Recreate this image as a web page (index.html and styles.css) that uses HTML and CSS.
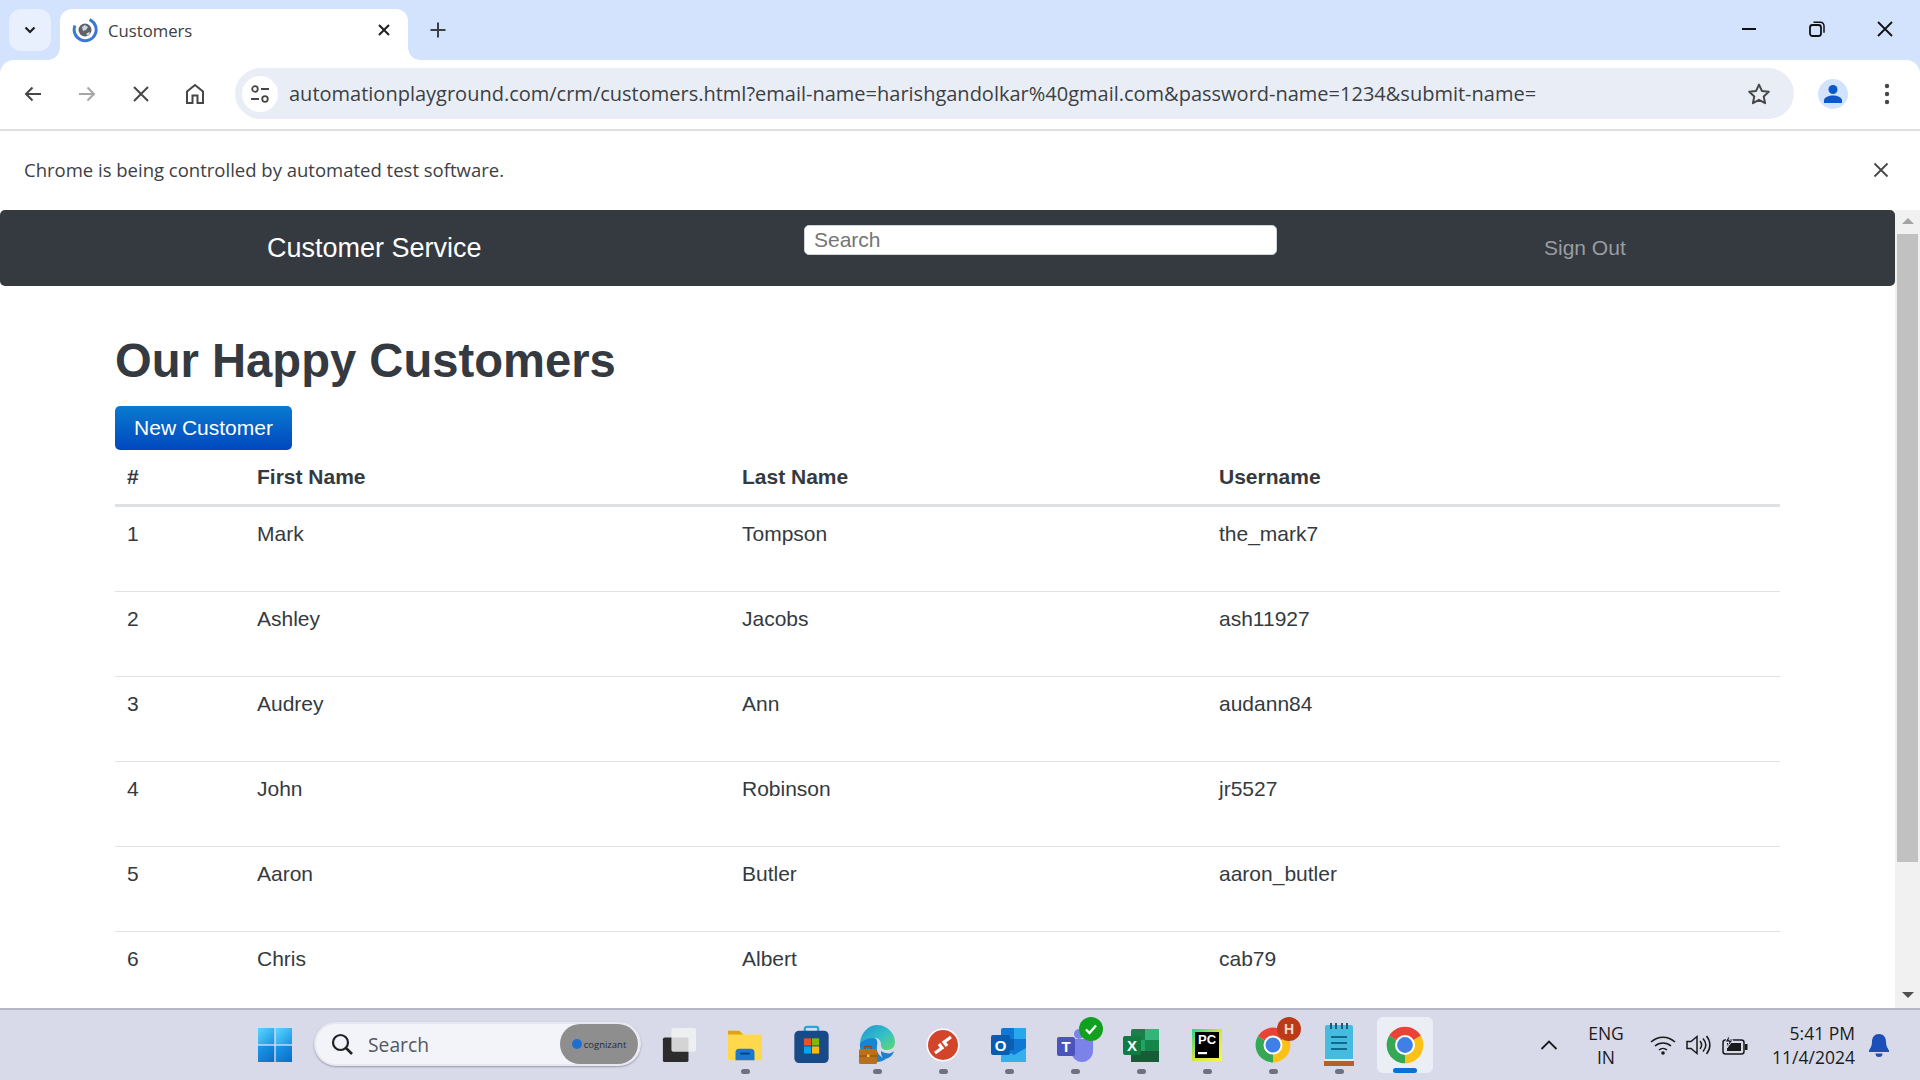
FILE: index.html
```html
<!DOCTYPE html>
<html lang="en">
<head>
<meta charset="utf-8">
<title>Customers</title>
<link rel="stylesheet" href="styles.css">
</head>
<body>
<svg class="defs" aria-hidden="true">
  <symbol id="chrome" viewBox="0 0 48 48">
    <path fill="#ea4335" d="M24 24L43.05 13A22 22 0 0 0 4.95 13Z"/>
    <path fill="#fbc116" d="M24 24L43.05 13A22 22 0 0 1 24 46Z"/>
    <path fill="#34a853" d="M24 24L24 46A22 22 0 0 1 4.95 13Z"/>
    <circle cx="24" cy="24" r="12" fill="#fff"/>
    <circle cx="24" cy="24" r="9.5" fill="#3f80e8"/>
  </symbol>
</svg>
<div class="screen">
  <header class="titlebar">
    <div class="tab-group"><svg width="14" height="14" viewBox="0 0 14 14"><path d="M2.5 4.5L7 9l4.500-4.500" fill="none" stroke="#1f1f1f" stroke-width="2.200"/></svg></div>
    <div class="tab">
      <svg class="favicon" width="26" height="26" viewBox="0 0 26 26"><circle cx="13" cy="13" r="6.500" fill="#5f6368"/><path d="M10 10l3-2 3 2-2 3-3 1zM14 17l3-2 1 1-2 3z" fill="#c9d4e6"/><path d="M17.500 2.600A11 11 0 1 1 3 8.500" fill="none" stroke="#3a78d6" stroke-width="3"/></svg>
      <span class="tab-title">Customers</span>
      <svg class="tab-close" width="14" height="14" viewBox="0 0 14 14"><path d="M2 2l10 10M12 2L2 12" stroke="#1f1f1f" stroke-width="2"/></svg>
    </div>
    <svg class="new-tab" width="18" height="18" viewBox="0 0 18 18"><path d="M9 1.500v15M1.500 9h15" stroke="#3c4043" stroke-width="2"/></svg>
    <div class="win-controls">
      <svg width="16" height="16" viewBox="0 0 16 16"><path d="M1 8h14" stroke="#111" stroke-width="2"/></svg>
      <svg width="16" height="16" viewBox="0 0 16 16"><rect x="1" y="4" width="11" height="11" rx="2.500" fill="none" stroke="#111" stroke-width="1.800"/><path d="M4.500 1.200h7a3.500 3.500 0 0 1 3.500 3.500v7" fill="none" stroke="#111" stroke-width="1.500"/></svg>
      <svg width="16" height="16" viewBox="0 0 16 16"><path d="M1 1l14 14M15 1L1 15" stroke="#111" stroke-width="1.800"/></svg>
    </div>
  </header>

  <nav class="toolbar">
    <span class="tool"><svg width="20" height="20" viewBox="0 0 20 20"><path d="M18 10H3M9.500 3.500L3 10l6.500 6.500" fill="none" stroke="#474747" stroke-width="2"/></svg></span>
    <span class="tool"><svg width="20" height="20" viewBox="0 0 20 20"><path d="M2 10h15M10.500 3.500L17 10l-6.500 6.500" fill="none" stroke="#a6a6a6" stroke-width="2"/></svg></span>
    <span class="tool"><svg width="18" height="18" viewBox="0 0 18 18"><path d="M2 2l14 14M16 2L2 16" stroke="#474747" stroke-width="2"/></svg></span>
    <span class="tool"><svg width="20" height="22" viewBox="0 0 20 22"><path d="M2 20V8.500L10 2l8 6.500V20h-5.500v-7.500h-5V20z" fill="none" stroke="#474747" stroke-width="2"/></svg></span>
    <div class="omnibox">
      <span class="site-info"><svg width="20" height="20" viewBox="0 0 20 20"><circle cx="5" cy="5" r="2.800" fill="none" stroke="#474747" stroke-width="1.800"/><path d="M11 5h8M1 15h8" stroke="#474747" stroke-width="1.800"/><circle cx="15" cy="15" r="2.800" fill="none" stroke="#474747" stroke-width="1.800"/></svg></span>
      <span class="url">automationplayground.com/crm/customers.html?email-name=harishgandolkar%40gmail.com&amp;password-name=1234&amp;submit-name=</span>
      <svg class="star" width="24" height="24" viewBox="0 0 24 24"><path d="M12 2.600l2.900 6.300 6.900.8-5.100 4.700 1.400 6.800-6.100-3.400-6.100 3.400 1.400-6.800-5.100-4.700 6.900-.8z" fill="none" stroke="#474747" stroke-width="2" stroke-linejoin="round"/></svg>
    </div>
    <span class="avatar"><svg width="20" height="20" viewBox="0 0 20 20"><circle cx="10" cy="5.500" r="4.500" fill="#0b57d0"/><path d="M1 19v-2.500C1 13 6 11.500 10 11.500s9 1.500 9 5V19z" fill="#0b57d0"/></svg></span>
    <span class="kebab"><svg width="6" height="22" viewBox="0 0 6 22"><circle cx="3" cy="3" r="2.200" fill="#474747"/><circle cx="3" cy="11" r="2.200" fill="#474747"/><circle cx="3" cy="19" r="2.200" fill="#474747"/></svg></span>
  </nav>

  <div class="infobar">
    <span>Chrome is being controlled by automated test software.</span>
    <svg width="16" height="16" viewBox="0 0 16 16"><path d="M1.500 1.500l13 13M14.500 1.500l-13 13" stroke="#474747" stroke-width="1.800"/></svg>
  </div>

  <div class="viewport">
    <main class="page">
      <div class="navbar">
        <a class="brand">Customer Service</a>
        <input class="nav-search" type="text" placeholder="Search">
        <a class="signout">Sign Out</a>
      </div>
      <section class="content">
        <h1>Our Happy Customers</h1>
        <button class="btn-new">New Customer</button>
        <table class="customers">
          <colgroup><col class="c1"><col class="c2"><col class="c3"><col class="c4"></colgroup>
          <thead><tr><th>#</th><th>First Name</th><th>Last Name</th><th>Username</th></tr></thead>
          <tbody>
            <tr><td>1</td><td>Mark</td><td>Tompson</td><td>the_mark7</td></tr>
            <tr><td>2</td><td>Ashley</td><td>Jacobs</td><td>ash11927</td></tr>
            <tr><td>3</td><td>Audrey</td><td>Ann</td><td>audann84</td></tr>
            <tr><td>4</td><td>John</td><td>Robinson</td><td>jr5527</td></tr>
            <tr><td>5</td><td>Aaron</td><td>Butler</td><td>aaron_butler</td></tr>
            <tr><td>6</td><td>Chris</td><td>Albert</td><td>cab79</td></tr>
          </tbody>
        </table>
      </section>
    </main>
    <aside class="scrollbar">
      <span class="arrow-up"></span>
      <span class="thumb"></span>
      <span class="arrow-down"></span>
    </aside>
  </div>

  <footer class="taskbar">
    <span class="start"><svg width="36" height="36" viewBox="0 0 36 36"><defs><linearGradient id="w1" x1="0" y1="0" x2="1" y2="1"><stop offset="0" stop-color="#5cd6fb"/><stop offset="1" stop-color="#1a93e6"/></linearGradient><linearGradient id="w2" x1="0" y1="0" x2="1" y2="1"><stop offset="0" stop-color="#1b9be8"/><stop offset="1" stop-color="#0a6cc9"/></linearGradient></defs><path d="M1 1h16.300v16.300H1z" fill="url(#w1)"/><path d="M18.700 1H35v16.300H18.700z" fill="url(#w1)"/><path d="M1 18.700h16.300V35H1z" fill="url(#w2)"/><path d="M18.700 18.700H35V35H18.700z" fill="url(#w2)"/></svg></span>
    <div class="task-search">
      <svg width="24" height="24" viewBox="0 0 24 24"><circle cx="10.500" cy="10.500" r="7.500" fill="none" stroke="#222" stroke-width="2.200"/><path d="M16 16l6 6" stroke="#222" stroke-width="2.600"/></svg>
      <span class="task-search-label">Search</span>
      <span class="cognizant"><i class="cog-dot"></i>cognizant</span>
    </div>
    <div class="apps">
      <span class="app"><svg width="36" height="36" viewBox="0 0 38 38"><rect x="2" y="11" width="27" height="26" rx="2" fill="#2c2c2c"/><rect x="11" y="1" width="26" height="25" rx="2" fill="#f2f2f2" fill-opacity=".85"/></svg></span>
      <span class="app dot"><svg width="36" height="34" viewBox="0 0 38 34"><path d="M1 4a2 2 0 0 1 2-2h10l4 4h20v27H1z" fill="#ffd84d"/><path d="M1 2h12l4 4H1z" fill="#e0a411"/><path d="M9 33v-8a4 4 0 0 1 4-4h12a4 4 0 0 1 4 4v8z" fill="#1a78d0"/><path d="M14 26h10" stroke="#0b3e78" stroke-width="2"/></svg></span>
      <span class="app"><svg width="35" height="40" viewBox="0 0 36 42"><path d="M11 9V4a2 2 0 0 1 2-2h10a2 2 0 0 1 2 2v5" fill="none" stroke="#29a6e0" stroke-width="2.400"/><rect y="6" width="36" height="34" rx="5" fill="#174a86"/><rect x="10" y="14" width="7.500" height="7.500" fill="#f25022"/><rect x="18.500" y="14" width="7.500" height="7.500" fill="#7fba00"/><rect x="10" y="22.500" width="7.500" height="7.500" fill="#00a4ef"/><rect x="18.500" y="22.500" width="7.500" height="7.500" fill="#ffb900"/></svg></span>
      <span class="app dot"><svg width="36" height="40" viewBox="0 0 36 40"><defs><linearGradient id="e1" x1="0" y1="0" x2="1" y2="1"><stop offset="0" stop-color="#1b94d8"/><stop offset=".55" stop-color="#35c1c4"/><stop offset="1" stop-color="#64d86a"/></linearGradient></defs><path d="M1 18C2 7 10 0 18 0c10 0 18 8 18 17 0 5-3 8-8 8-4 0-6-2-6-5 0-4-2-7-6-7-7 0-11 3-15 5z" fill="url(#e1)"/><path d="M1 18c3-3 8-5 13-5 4 0 5 3 4 8-1 6 2 11 9 13-3 2-6 3-9 3C8 37 0 29 1 18z" fill="#1a84cf"/><path d="M26 34c5-1 8-4 9-8-2 2-5 3-8 2-2 0-3-1-5-2 0 4 1 7 4 8z" fill="#1f7fc8"/><rect x="0" y="24" width="18" height="15" rx="1.500" fill="#b8701c"/><path d="M0 31h18" stroke="#8a4a10" stroke-width="1"/><path d="M6 24v-2.500h6V24" fill="none" stroke="#8a4a10" stroke-width="1.500"/><rect x="8" y="29.500" width="2.500" height="2.500" fill="#f4c34a"/></svg></span>
      <span class="app dot"><svg width="34" height="34" viewBox="0 0 34 34"><circle cx="17" cy="17" r="16.500" fill="#fff"/><circle cx="17" cy="17" r="15" fill="#d3452b"/><path d="M25 9l-7 5 3 4M9 25l7-5-3-4" fill="none" stroke="#fff" stroke-width="3.200"/></svg></span>
      <span class="app dot"><svg width="36" height="34" viewBox="0 0 36 34"><rect x="10" y="0" width="25" height="34" rx="2" fill="#0f78d4"/><rect x="23" y="0" width="12" height="11" fill="#28a8ea"/><rect x="10" y="11" width="13" height="11" fill="#0a5fb0"/><path d="M10 20l13 7 12-7v14H10z" fill="#35b0ee"/><rect x="0" y="7" width="19" height="20" rx="2" fill="#0a5cb0"/><text class="app-letter" x="9.500" y="22.500" text-anchor="middle">O</text></svg></span>
      <span class="app dot"><svg width="36" height="33" viewBox="0 0 36 33"><circle cx="22" cy="5" r="5" fill="#7b83eb"/><path d="M14 10h20a2 2 0 0 1 2 2v10c0 6-5 11-11 11s-11-5-11-11z" fill="#7b83eb"/><rect x="0" y="8" width="18" height="19" rx="2" fill="#4b53bc"/><text class="app-letter" x="9" y="23" text-anchor="middle">T</text></svg><span class="badge badge-green"><svg width="14" height="14" viewBox="0 0 14 14"><path d="M2 7.500L5.500 11 12 3.500" fill="none" stroke="#fff" stroke-width="2.400"/></svg></span></span>
      <span class="app dot"><svg width="36" height="33" viewBox="0 0 36 33"><rect x="8" y="0" width="28" height="33" rx="2" fill="#1a7f4c"/><rect x="22" y="0" width="14" height="11" fill="#35b479"/><rect x="8" y="11" width="14" height="11" fill="#21a366"/><rect x="22" y="11" width="14" height="11" fill="#15854a"/><rect x="8" y="22" width="28" height="11" fill="#185c37"/><rect x="0" y="7" width="18" height="19" rx="2" fill="#107c41"/><text class="app-letter" x="9" y="22" text-anchor="middle">X</text></svg></span>
      <span class="app dot"><svg width="30" height="32" viewBox="0 0 30 32"><defs><linearGradient id="pc" x1="0" y1="0" x2="1" y2="1"><stop offset="0" stop-color="#21d789"/><stop offset=".5" stop-color="#d4e53a"/><stop offset="1" stop-color="#fcf84a"/></linearGradient></defs><rect width="30" height="32" fill="url(#pc)"/><rect x="3" y="3" width="24" height="26" fill="#000"/><text class="pc-letter" x="15" y="15" text-anchor="middle">PC</text><rect x="6" y="23" width="9" height="2.200" fill="#fff"/></svg></span>
      <span class="app dot"><svg width="38" height="46"><use href="#chrome"/></svg><span class="badge badge-red">H</span></span>
      <span class="app dot"><svg width="30" height="46" viewBox="0 0 30 46"><rect x="1" y="3" width="28" height="37" rx="2" fill="#45bcdf"/><path d="M7 1v6M12 1v6M18 1v6M23 1v6" stroke="#1d5c78" stroke-width="2"/><path d="M7 15h16M7 21h16M7 27h16" stroke="#0f6a8c" stroke-width="2.200"/><rect y="38" width="30" height="6" fill="#b5602a"/><rect y="37" width="30" height="2" fill="#f4e6d0"/></svg></span>
      <span class="app active"><svg width="40" height="46"><use href="#chrome"/></svg></span>
    </div>
    <div class="tray">
      <svg class="tray-chevron" width="18" height="10" viewBox="0 0 18 10"><path d="M1.500 9L9 1.500 16.500 9" fill="none" stroke="#1a1a1a" stroke-width="1.800"/></svg>
      <span class="lang">ENG<br>IN</span>
      <svg class="tray-wifi" width="26" height="20" viewBox="0 0 26 20"><path d="M1 7c7-6.500 17-6.500 24 0M5 11c4.500-4 11.500-4 16 0M9 15c2.300-2 5.700-2 8 0" fill="none" stroke="#1a1a1a" stroke-width="1.500"/><circle cx="13" cy="18" r="1.800" fill="#1a1a1a"/></svg>
      <svg class="tray-vol" width="26" height="22" viewBox="0 0 26 22"><path d="M1 7.500h4l6-5v17l-6-5H1z" fill="none" stroke="#1a1a1a" stroke-width="1.500"/><path d="M14 7c2 2.500 2 5.500 0 8M17 4.500c3.500 4 3.500 9 0 13M20.500 2c4.500 5.500 4.500 12.500 0 18" fill="none" stroke="#1a1a1a" stroke-width="1.500"/></svg>
      <svg class="tray-batt" width="26" height="22" viewBox="0 0 26 22"><rect x="1" y="6" width="21" height="14" rx="2.500" fill="none" stroke="#1a1a1a" stroke-width="1.500"/><rect x="5" y="9" width="14" height="8" fill="#1a1a1a"/><rect x="23" y="10" width="2.500" height="6" fill="#1a1a1a"/><path d="M8 0L3 8h4l-2 6 6-8H7z" fill="#1a1a1a" stroke="#d8daea"/></svg>
      <span class="clock">5:41 PM<br>11/4/2024</span>
      <svg class="tray-bell" width="22" height="24" viewBox="0 0 22 24"><path d="M11 1c-4.500 0-7 3.500-7 7.500 0 5-2 7-3 9v1.500h20v-1.500c-1-2-3-4-3-9C18 4.500 15.500 1 11 1z" fill="#1c4fb8"/><path d="M7.500 20.500a3.500 3.500 0 0 0 7 0z" fill="#1c4fb8"/></svg>
    </div>
  </footer>
</div>
</body>
</html>
```

FILE: styles.css
```css
* { box-sizing: border-box; }
html, body { margin: 0; padding: 0; height: 100%; overflow: hidden; }
body { font-family: "Liberation Sans", Arial, sans-serif; color: #212529; background: #fff; }
.defs { width: 0; height: 0; position: absolute; }
.screen { width: 1920px; height: 1080px; display: flex; flex-direction: column; overflow: hidden; background: #d3e3fd; }

/* window tab strip */
.titlebar { height: 60px; flex: none; display: flex; align-items: flex-start; padding: 9px 0 0 9px; }
.tab-group { width: 42px; height: 42px; border-radius: 12px; background: #e8f0fe; display: flex; align-items: center; justify-content: center; }
.tab { position: relative; width: 348px; height: 51px; margin-left: 9px; padding: 0 17px 9px 12px; background: #fff; border-radius: 12px 12px 0 0; display: flex; align-items: center; }
.tab::before, .tab::after { content: ""; position: absolute; bottom: 0; width: 12px; height: 12px; }
.tab::before { left: -12px; background: radial-gradient(circle at 0 0, #d3e3fd 11.500px, #fff 12px); }
.tab::after { right: -12px; background: radial-gradient(circle at 100% 0, #d3e3fd 11.500px, #fff 12px); }
.tab-title { margin-left: 10px; font: 16.700px "Open Sans", "Noto Sans", sans-serif; color: #3c4043; flex: 1; }
.new-tab { margin: 12px 0 0 21px; }
.win-controls { margin-left: auto; display: flex; align-items: center; height: 40px; gap: 52px; padding-right: 27px; }

/* browser toolbar */
.toolbar { height: 71px; flex: none; background: #fff; border-bottom: 2px solid #dedede; border-radius: 14px 14px 0 0; display: flex; align-items: center; padding: 0 0 2px 11px; }
.tool { width: 44px; height: 44px; margin-right: 10px; display: flex; align-items: center; justify-content: center; flex: none; }
.omnibox { width: 1559px; height: 51px; margin-left: 8px; border-radius: 26px; background: #e9eef6; display: flex; align-items: center; padding: 0 23px 0 7px; flex: none; }
.site-info { width: 36px; height: 36px; border-radius: 50%; background: #fff; display: flex; align-items: center; justify-content: center; flex: none; }
.url { margin-left: 11px; font: 20px "Open Sans", "Noto Sans", sans-serif; color: #3c4043; white-space: nowrap; flex: 1; overflow: hidden; }
.star { flex: none; }
.avatar { width: 30px; height: 30px; margin-left: 24px; border-radius: 50%; background: #d3e3fd; display: flex; align-items: center; justify-content: center; flex: none; }
.kebab { margin-left: 36px; display: flex; flex: none; }

/* automation infobar */
.infobar { height: 79px; flex: none; background: #fff; display: flex; align-items: center; justify-content: space-between; padding: 0 31px 2px 24px; font: 18.500px "Open Sans", "Noto Sans", sans-serif; color: #3c4043; }

/* page */
.viewport { flex: 1; min-height: 0; display: flex; overflow: hidden; background: #fff; }
.page { width: 1895px; flex: none; overflow: hidden; }
.navbar { height: 76px; background: #343a40; border-radius: 5px; display: flex; align-items: center; padding-left: 267px; }
.brand { width: 537px; flex: none; font-size: 27px; color: #fff; }
.nav-search { width: 473px; height: 30px; flex: none; margin-bottom: 16px; border: 1px solid #ced4da; border-radius: 5px; padding: 0 9px; font: 21px "Liberation Sans", sans-serif; background: #fff; color: #495057; outline: none; }
.nav-search::placeholder { color: #757575; opacity: 1; }
.signout { margin-left: 267px; font-size: 21px; color: #9a9da0; }
.content { padding: 45px 115px 0; }
h1 { margin: 0 0 15px; font-size: 47.200px; line-height: 60px; font-weight: 700; color: #343a3f; }
.btn-new { display: block; width: 177px; height: 44px; padding: 0; border: 0; border-radius: 5px; background: linear-gradient(#0a7bd0, #0047bf); color: #fff; font: 21px "Liberation Sans", sans-serif; }
.customers { width: 1665px; border-collapse: collapse; table-layout: fixed; color: #343a40; font-size: 21px; }
.c1 { width: 130px; }
.c2 { width: 485px; }
.c3 { width: 477px; }
.c4 { width: 573px; }
th, td { padding: 12px; text-align: left; vertical-align: top; line-height: 30px; }
th { border-bottom: 3px solid #dee2e6; height: 55px; font-weight: 700; }
td { height: 85px; border-bottom: 1px solid #dee2e6; }
tbody tr:first-child td { height: 86px; }

/* scrollbar */
.scrollbar { width: 25px; flex: none; background: #f1f1f1; display: flex; flex-direction: column; align-items: center; padding-top: 8px; }
.arrow-up { width: 0; height: 0; border-left: 6px solid transparent; border-right: 6px solid transparent; border-bottom: 6px solid #a3a3a3; }
.thumb { width: 21px; height: 628px; margin: 10px 0 0; background: #c1c1c1; }
.arrow-down { width: 0; height: 0; margin-top: 130px; border-left: 6px solid transparent; border-right: 6px solid transparent; border-top: 6px solid #505050; }

/* windows taskbar */
.taskbar { height: 72px; flex: none; border-top: 2px solid #b5b5c3; background: #d8daea; display: flex; align-items: center; }
.start { width: 66px; margin-left: 242px; display: flex; justify-content: center; flex: none; }
.task-search { width: 327px; height: 44px; margin-left: 6px; margin-bottom: 2px; border-radius: 22px; border: 2px solid #e6e8f0; background: #f2f4f9; box-shadow: 0 1px 2px #9a9aa8; display: flex; align-items: center; padding: 0 1px 0 14px; flex: none; }
.task-search-label { margin-left: 14px; font: 19.300px "Open Sans", "Noto Sans", sans-serif; color: #55585f; flex: 1; }
.cognizant { width: 78px; height: 40px; border-radius: 20px; background: #8e8e8e; font: 9.500px "Open Sans", "Noto Sans", sans-serif; color: #1f2a44; display: flex; align-items: center; justify-content: center; gap: 2px; }
.cog-dot { width: 10px; height: 10px; border-radius: 50%; background: #1e6fd0; flex: none; }
.apps { display: flex; margin-left: 5px; flex: none; }
.app { position: relative; width: 66px; height: 56px; display: flex; align-items: center; justify-content: center; flex: none; }
.app.dot::after { content: ""; position: absolute; left: 29px; bottom: -1px; width: 9px; height: 5px; border-radius: 3px; background: #6f7180; }
.app.active { width: 56px; margin-left: 5px; border-radius: 6px; background: #eceef6; }
.app.active::after { content: ""; position: absolute; left: 16px; bottom: 0; width: 24px; height: 5px; border-radius: 3px; background: #0a6fd6; }
.app-letter { font: 700 15px "Liberation Sans", sans-serif; fill: #fff; }
.pc-letter { font: 700 13px "Liberation Sans", sans-serif; fill: #fff; }
.badge { position: absolute; top: 0; left: 37px; width: 24px; height: 24px; border-radius: 50%; display: flex; align-items: center; justify-content: center; color: #fff; font: 700 14px "Liberation Sans", sans-serif; }
.badge-green { background: #12a11f; }
.badge-red { background: #bd3a17; color: #f5d9c8; }
.tray { display: flex; align-items: center; flex: none; color: #1a1a1a; font: 17.500px "Open Sans", "Noto Sans", sans-serif; }
.tray-chevron { margin-left: 107px; flex: none; }
.lang { width: 60px; margin-left: 18px; text-align: center; line-height: 24px; }
.tray-wifi { margin-left: 14px; }
.tray-vol { margin-left: 10px; }
.tray-batt { margin-left: 10px; }
.clock { width: 100px; margin-left: 7px; text-align: right; line-height: 24px; }
.tray-bell { margin-left: 13px; }
```
